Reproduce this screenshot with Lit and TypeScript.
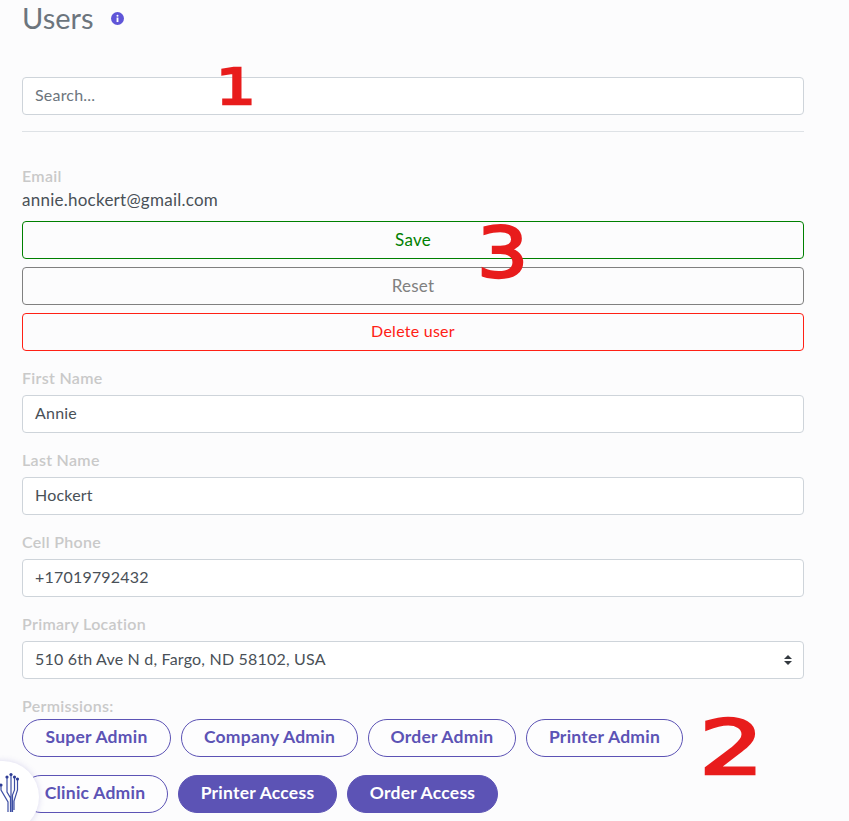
import { LitElement, html, css } from "lit";
import { customElement } from "lit/decorators.js";

const ROW_FIELDS = [
  ["First Name", "Annie"],
  ["Last Name", "Hockert"],
  ["Cell Phone", "+17019792432"],
];
const CHIPS = [
  { label: "Super Admin", w: 149, on: false },
  { label: "Company Admin", w: 177, on: false },
  { label: "Order Admin", w: 148, on: false },
  { label: "Printer Admin", w: 157, on: false },
  { label: "Clinic Admin", w: 146, on: false },
  { label: "Printer Access", w: 159, on: true },
  { label: "Order Access", w: 151, on: true },
];

@customElement("app-root")
export class AppRoot extends LitElement {
  static styles = css`
    :host { display: block; height: 821px; overflow: hidden; position: relative; background: #fcfcfd; font-family: "Lato", "Open Sans", sans-serif; font-size: 17px; letter-spacing: 0.25px; color: #495057; }
    .page { width: 782px; margin-left: 22px; display: flex; flex-direction: column; }
    .title { display: flex; align-items: center; height: 36px; font-size: 29px; letter-spacing: 0; color: #6c757d; gap: 17px; padding-bottom: 2px; box-sizing: border-box; }
    .title svg { margin-top: 3px; }
    .search { margin-top: 41px; }
    .field { box-sizing: border-box; height: 38px; border: 1px solid #ced4da; border-radius: 4px; background: #fff; padding: 0 12px 4px; display: flex; align-items: center; justify-content: space-between; color: #495057; font-size: 16px; letter-spacing: 0.2px; }
    .ph { color: #6c757d; }
    hr { border: 0; border-top: 1px solid #dee2e6; margin: 16px 0 0; width: 100%; }
    .label { font-weight: 600; color: #c9c9c9; line-height: 22px; padding-bottom: 2px; font-size: 16px; letter-spacing: 0.3px; }
    .group { margin-top: 16px; }
    .group .label { margin-bottom: 4px; }
    .first { margin-top: 33px; margin-bottom: -1px; }
    .btn { box-sizing: border-box; height: 38px; border: 1px solid; border-radius: 4px; display: flex; align-items: center; justify-content: center; padding-bottom: 2px; }
    .save { border-color: #008000; color: #008000; }
    .reset { border-color: #808080; color: #808080; margin-top: 8px; }
    .del { border-color: #ff2015; color: #ff2015; margin-top: 8px; font-size: 16px; padding-bottom: 4px; }
    .email { line-height: 22px; padding-bottom: 2px; margin-top: 1px; margin-bottom: 8px; }
    .caret { display: flex; flex-direction: column; gap: 2px; margin-top: 4px; margin-right: -1px; }
    .perm { margin-top: 16px; }
    .chips { display: flex; flex-wrap: wrap; gap: 18.5px 10px; width: 700px; }
    .chip { box-sizing: border-box; height: 37.5px; border: 1px solid #5c53b5; border-radius: 19px; color: #5c53b5; font-size: 17.5px; font-weight: 700; display: flex; align-items: center; justify-content: center; padding-bottom: 2px; background: #fdfdfe; }
    .chip.on { background: #5c53b5; color: #fff; }
    .mark { position: absolute; color: #e81c1c; -webkit-text-stroke: 2.5px #e81c1c; font-family: "DejaVu Sans", sans-serif; font-weight: 400; line-height: 1; letter-spacing: 0; transform-origin: left top; }
    .m1 { left: 216px; top: 62px; font-size: 50px; transform: scaleX(1.25); }
    .m3 { left: 477px; top: 218px; font-size: 70px; transform: scaleX(1.15); }
    .m2 { left: 699px; top: 711px; font-size: 74px; transform: scaleX(1.38); }
    .bubble { position: absolute; left: -33px; top: 761px; width: 72px; height: 72px; border-radius: 50%; background: #fff; box-shadow: 0 0 6px rgba(92, 83, 181, 0.22); }
    .logo { position: absolute; left: 0; top: 770px; }
  `;
  render() {
    return html`<div class="page">
        <div class="title">
          Users
          <svg width="13" height="13" viewBox="0 0 14 14"><circle cx="7" cy="7" r="7" fill="#5f55d8" /><circle cx="7" cy="4" r="1.1" fill="#fff" /><rect x="6" y="6" width="2" height="4.8" fill="#fff" /></svg>
        </div>
        <div class="field search"><span class="ph">Search...</span></div>
        <hr />
        <div class="label first">Email</div>
        <div class="email">annie.hockert@gmail.com</div>
        <div class="btn save">Save</div>
        <div class="btn reset">Reset</div>
        <div class="btn del">Delete user</div>
        ${ROW_FIELDS.map(
          ([l, v]) => html`<div class="group"><div class="label">${l}</div><div class="field">${v}</div></div>`
        )}
        <div class="group">
          <div class="label">Primary Location</div>
          <div class="field">
            510 6th Ave N d, Fargo, ND 58102, USA
            <span class="caret">
              <svg width="8" height="4" viewBox="0 0 8 4"><path d="M4 0L8 4H0Z" fill="#343a40" /></svg>
              <svg width="8" height="4" viewBox="0 0 8 4"><path d="M0 0H8L4 4Z" fill="#343a40" /></svg>
            </span>
          </div>
        </div>
        <div class="label perm">Permissions:</div>
        <div class="chips">
          ${CHIPS.map(
            (c) => html`<div class="chip ${c.on ? "on" : ""}" style="width:${c.w}px">${c.label}</div>`
          )}
        </div>
      </div>
      <div class="mark m1">1</div>
      <div class="mark m3">3</div>
      <div class="mark m2">2</div>
      <div class="bubble"></div>
      <svg class="logo" width="22" height="46" viewBox="0 770 22 46" fill="none" stroke="#3d4ea3" stroke-width="1.2">
        <path d="M1 785V790L8 802V812M7 777V792L10.5 798V812M11 774V812M14.5 777V790L12.5 795V812M17.5 779V790L14 801V810" />
        <g fill="#2f3d96" stroke="none">
          <circle cx="1" cy="785" r="1.6" /><circle cx="7" cy="777" r="1.6" /><circle cx="11" cy="774.5" r="1.6" /><circle cx="14.5" cy="777" r="1.6" /><circle cx="17.5" cy="779" r="1.6" />
        </g>
      </svg>`;
  }
}
